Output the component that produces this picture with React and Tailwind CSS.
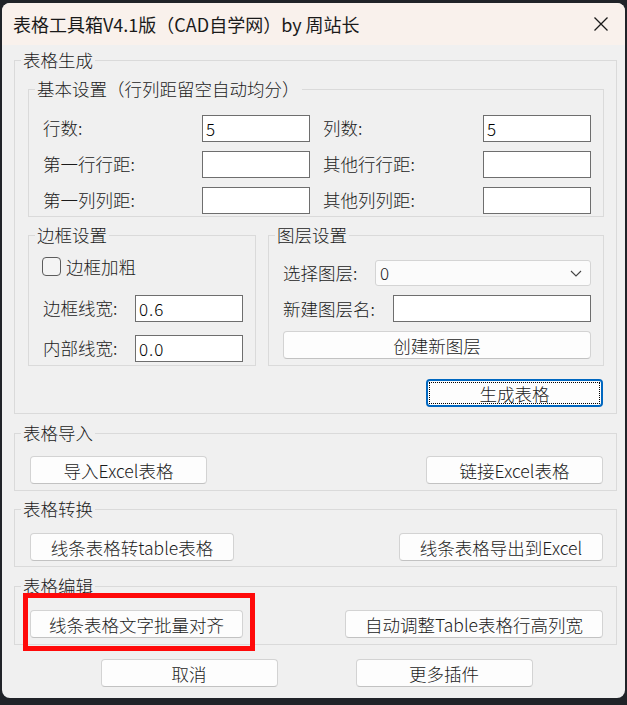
import React from "react";

const font = { fontFamily: '"Noto Sans CJK SC", "Noto Sans", sans-serif' };

// group box: the legend sits on the top border, padding lives on the inner div
function Group({ title, className = "", pad = "", children }) {
  return (
    <fieldset className={`border border-[#dadada] min-w-0 ${className}`}>
      <legend className="ml-[6px] px-[2px] text-[17.5px] leading-[22px] text-[#1b1b1b]">
        {title}
      </legend>
      <div className={pad}>{children}</div>
    </fieldset>
  );
}

function Field({ value = "", className = "" }) {
  return (
    <div
      className={`h-[27px] border border-[#6e6e6e] bg-white pl-[3px] text-[17px] leading-[25px] text-black ${className}`}
    >
      {value}
    </div>
  );
}

function Btn({ children, className = "" }) {
  return (
    <button
      type="button"
      className={`h-[28px] rounded-[4px] border border-[#d3d3d3] border-b-[#c2c2c2] bg-[#fdfdfd] text-[17.5px] leading-none text-[#1b1b1b] ${className}`}
    >
      {children}
    </button>
  );
}

export default function App() {
  return (
    <div
      className="w-[627px] h-[705px] bg-[#202328] pt-[3px] pl-[2px] pr-[2px] overflow-hidden"
      style={font}
    >
      <div className="w-[623px] h-[695px] rounded-[8px] overflow-hidden bg-[#f0f0f0] flex flex-col">
        {/* title bar */}
        <div className="h-[42px] shrink-0 bg-[#f9f1ec] flex items-center justify-between pl-[11px] pr-[16px]">
          <span className="text-[18px] text-[#1a1a1a] leading-none">
            表格工具箱V4.1版（CAD自学网）by 周站长
          </span>
          <svg width="16" height="16" viewBox="0 0 16 16" className="text-[#1a1a1a]">
            <path d="M1.5 1.5 L14.5 14.5 M14.5 1.5 L1.5 14.5" stroke="currentColor" strokeWidth="1.3" fill="none" />
          </svg>
        </div>

        {/* body */}
        <div className="pl-[12px] pr-[8px] pt-[4px] flex flex-col font-light">
          <Group title="表格生成" pad="pl-[13px] pr-[12px] pt-[7px] pb-[6px]">
            <Group title="基本设置（行列距留空自动均分）" pad="pl-[14px] pr-[12px] pt-[15px] pb-[2px]">
              <div className="grid grid-cols-[159px_108px_1fr_108px] gap-y-[9px] items-center text-[17.5px] text-[#1b1b1b]">
                <span>行数:</span>
                <Field value="5" />
                <span className="pl-[13px]">列数:</span>
                <Field value="5" />
                <span>第一行行距:</span>
                <Field />
                <span className="pl-[13px]">其他行行距:</span>
                <Field />
                <span>第一列列距:</span>
                <Field />
                <span className="pl-[13px]">其他列列距:</span>
                <Field />
              </div>
            </Group>

            <div className="mt-[7px] flex gap-[12px] items-stretch">
              <Group title="边框设置" className="w-[228px]" pad="pl-[13px] pr-[12px] pt-[11px] pb-[3px]">
                <div className="flex items-center gap-[5px] text-[17.5px] text-[#1b1b1b] leading-[19px]">
                  <span className="w-[19px] h-[19px] rounded-[4px] border border-[#5c5c5c] bg-[#f4f4f4]" />
                  <span>边框加粗</span>
                </div>
                <div className="mt-[19px] flex items-center pl-[1px] text-[17.5px] text-[#1b1b1b]">
                  <span className="w-[92px]">边框线宽:</span>
                  <Field value="0.6" className="w-[108px] tracking-[1px]" />
                </div>
                <div className="mt-[13px] flex items-center pl-[1px] text-[17.5px] text-[#1b1b1b]">
                  <span className="w-[92px]">内部线宽:</span>
                  <Field value="0.0" className="w-[108px] tracking-[1px]" />
                </div>
              </Group>

              <Group title="图层设置" className="w-[336px]" pad="pl-[14px] pr-[12px] pt-[14px] pb-[6px]">
                <div className="flex items-center text-[17.5px] text-[#1b1b1b]">
                  <span className="w-[92px]">选择图层:</span>
                  <div className="w-[216px] h-[26px] rounded-[3px] border border-[#d4d4d4] bg-[#fbfbfb] flex items-center justify-between pl-[4px] pr-[8px] text-[17px]">
                    <span>0</span>
                    <svg width="12" height="7" viewBox="0 0 12 7">
                      <path d="M1 1 L6 6 L11 1" stroke="#444" strokeWidth="1.1" fill="none" />
                    </svg>
                  </div>
                </div>
                <div className="mt-[9px] flex items-center text-[17.5px] text-[#1b1b1b]">
                  <span className="w-[110px]">新建图层名:</span>
                  <Field className="w-[198px]" />
                </div>
                <Btn className="mt-[9px] w-[308px]">创建新图层</Btn>
              </Group>
            </div>

            <div className="mt-[13px] flex justify-end pr-[1px]">
              <button
                type="button"
                className="relative w-[177px] h-[28px] rounded-[4px] border-2 border-[#0067c0] bg-[#fdfdfd] text-[17.5px] leading-none text-[#1b1b1b]"
              >
                <span className="absolute inset-[1px] border border-dotted border-black" />
                生成表格
              </button>
            </div>
          </Group>

          <Group title="表格导入" className="mt-[8px]" pad="pl-[15px] pr-[13px] pt-[12px] pb-[6px]">
            <div className="flex justify-between">
              <Btn className="w-[177px]">导入Excel表格</Btn>
              <Btn className="w-[177px]">链接Excel表格</Btn>
            </div>
          </Group>

          <Group title="表格转换" className="mt-[7px]" pad="pl-[15px] pr-[13px] pt-[13px] pb-[5px]">
            <div className="flex justify-between">
              <Btn className="w-[204px]">线条表格转table表格</Btn>
              <Btn className="w-[204px]">线条表格导出到Excel</Btn>
            </div>
          </Group>

          <div className="relative mt-[8px]">
            <Group title="表格编辑" pad="pl-[15px] pr-[13px] pt-[13px] pb-[6px]">
              <div className="flex justify-between">
                <Btn className="w-[213px]">线条表格文字批量对齐</Btn>
                <Btn className="w-[258px]">自动调整Table表格行高列宽</Btn>
              </div>
            </Group>
            <div className="absolute left-[9px] top-[18px] w-[232px] h-[58px] border-[5px] border-[#ff0a0a]" />
          </div>

          <div className="mt-[14px] flex justify-center gap-[78px] pl-[2px]">
            <Btn className="w-[177px]">取消</Btn>
            <Btn className="w-[177px]">更多插件</Btn>
          </div>
        </div>
      </div>
    </div>
  );
}
